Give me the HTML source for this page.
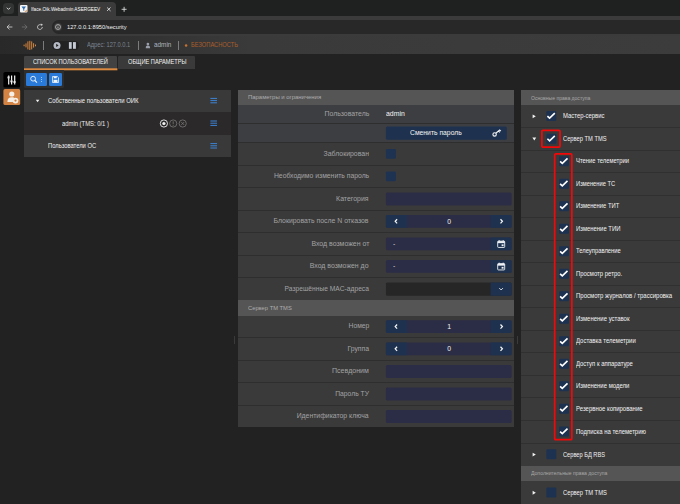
<!DOCTYPE html>
<html lang="ru"><head><meta charset="utf-8"><title>Iface.Oik.Webadmin ASERGEEV</title>
<style>
*{box-sizing:border-box;margin:0;padding:0}
html,body{width:680px;height:504px;overflow:hidden;background:#222222;font-family:"Liberation Sans",sans-serif;color:#e8e8e8}
.abs{position:absolute}
#root{position:relative;width:680px;height:504px;overflow:hidden;background:#222222}
.t{position:absolute;white-space:nowrap;line-height:1}
</style></head><body><div id="root">

<!-- browser chrome -->
<div class="abs" style="left:0px;top:0px;width:680px;height:16px;background:#1f2120"></div>
<div class="abs" style="left:3px;top:3px;width:11px;height:11px;background:#333535;border-radius:3.5px"></div>
<svg class="abs" style="left:6px;top:6px" width="6" height="6"><g transform="translate(0 0.8)"><path d="M0.8 0.9 L2.5 2.6 L4.2 0.9" fill="none" stroke="#e4e4e4" stroke-width="0.9"/></g></svg>
<div class="abs" style="left:18px;top:2px;width:98px;height:15px;background:#3b3b3b;border-radius:4px 4px 0 0"></div>
<svg class="abs" style="left:20px;top:5px" width="9" height="9"><g transform="translate(0 0) scale(0.5 0.5)"><rect width="15" height="15" rx="2" fill="#f4f6f8"/><path d="M3 3 H12 L8.5 8 V12 L6.5 11 V8 Z" fill="#2f6fb3"/><path d="M9 13.5 L13.5 9 V13.5 Z" fill="#e08a3c"/></g></svg>
<div class="t" style="left:30.6px;top:5.85px;font-size:6.2px;color:#ffffff;transform:scaleX(0.761);transform-origin:0 50%">Iface.Oik.Webadmin ASERGEEV</div>
<svg class="abs" style="left:106px;top:6px" width="7" height="7"><g transform="translate(0.5 0.9)"><path d="M0.6 0.6 L4 4 M4 0.6 L0.6 4" stroke="#e8e8e8" stroke-width="0.85"/></g></svg>
<svg class="abs" style="left:121px;top:6px" width="8" height="8"><g transform="translate(0.2 0.4)"><path d="M2.9 0.4 V5.4 M0.4 2.9 H5.4" stroke="#e0e0e0" stroke-width="0.85"/></g></svg>
<div class="abs" style="left:0px;top:16px;width:680px;height:20px;background:#3b3b3b;border-radius:3px 0 0 0"></div>
<div class="abs" style="left:51.5px;top:20.4px;width:640px;height:13.2px;background:#282828;border-radius:6.6px"></div>
<svg class="abs" style="left:6px;top:23px" width="8" height="9"><g transform="translate(0.3 0.8)"><path d="M3.3 0.7 L0.8 3.2 L3.3 5.7 M0.8 3.2 H6.1" fill="none" stroke="#d0d0d0" stroke-width="0.85"/></g></svg>
<svg class="abs" style="left:21px;top:23px" width="8" height="9"><g transform="translate(0.3 0.8)"><path d="M3.3 0.7 L5.8 3.2 L3.3 5.7 M5.8 3.2 H0.5" fill="none" stroke="#707070" stroke-width="0.85"/></g></svg>
<svg class="abs" style="left:36px;top:23px" width="9" height="9"><g transform="translate(0.6 0.6)"><path d="M5.7 3.4 A2.4 2.4 0 1 1 4.7 1.5" fill="none" stroke="#d0d0d0" stroke-width="0.85"/><path d="M3.9 0.2 L6.1 0.5 L5.3 2.6 Z" fill="#d0d0d0"/></g></svg>
<div class="abs" style="left:53.8px;top:22.8px;width:8.4px;height:8.4px;background:#3e3e3e;border-radius:50%"></div>
<svg class="abs" style="left:55px;top:24px" width="7" height="7"><g transform="translate(0 0)"><circle cx="3" cy="3" r="2.5" fill="none" stroke="#e4e4e4" stroke-width="0.6"/><path d="M3 2.7 V4.4" stroke="#e4e4e4" stroke-width="0.65"/><circle cx="3" cy="1.8" r="0.4" fill="#e4e4e4"/></g></svg>
<div class="t" style="left:67.2px;top:23.86px;font-size:6px;color:#f0f0f0;transform:scaleX(0.954);transform-origin:0 50%">127.0.0.1:8950/security</div>
<!-- app header -->
<div class="abs" style="left:0px;top:36px;width:680px;height:17.8px;background:linear-gradient(to right,#292929 0,#303030 110px,#3a3a3a 250px,#3c3c3c 100%)"></div>
<svg class="abs" style="left:23px;top:40px" width="15" height="12"><g transform="translate(0.4 0.6)"><g stroke="#d9873f" stroke-width="1" stroke-linecap="round"><path d="M0.7 4.4 V5.2"/><path d="M2.6 3.2 V6.4"/><path d="M4.5 1.2 V8.4"/><path d="M6.4 0.6 V9"/><path d="M8.3 1.2 V8.4"/><path d="M10.2 3.0 V6.6"/><path d="M12.1 4.3 V5.3"/></g></g></svg>
<div class="abs" style="left:43px;top:41px;width:1px;height:9px;background:#7c7c7c"></div>
<div class="abs" style="left:51.5px;top:40.8px;width:27.3px;height:9.2px;background:#222222;border-radius:4.6px"></div>
<svg class="abs" style="left:53px;top:41px" width="9" height="10"><g transform="translate(0.3 0.7)"><circle cx="3.7" cy="3.7" r="3.5" fill="#b4b9c4"/><path d="M2.9 2.1 L5.3 3.7 L2.9 5.3 Z" fill="#222"/></g></svg>
<svg class="abs" style="left:68px;top:42px" width="5" height="8"><g transform="translate(0.9 0.1)"><rect width="2.8" height="6.7" fill="#c5cad4"/></g></svg>
<svg class="abs" style="left:73px;top:42px" width="4" height="8"><g transform="translate(0 0.1)"><rect width="2.9" height="6.7" fill="#c5cad4"/></g></svg>
<div class="t" style="left:86.7px;top:41.81px;font-size:6.65px;color:#7c8492;transform:scaleX(0.858);transform-origin:0 50%">Адрес: 127.0.0.1</div>
<div class="abs" style="left:138px;top:41px;width:1px;height:9px;background:#7c7c7c"></div>
<svg class="abs" style="left:145px;top:42px" width="7" height="8"><g transform="translate(0.5 0.6)"><circle cx="2.4" cy="1.5" r="1.35" fill="#9aa0ab"/><path d="M0.2 5.6 C0.2 3.5 1 2.9 2.4 2.9 C3.8 2.9 4.6 3.5 4.6 5.6 Z" fill="#9aa0ab"/></g></svg>
<div class="t" style="left:153.6px;top:41.81px;font-size:6.65px;color:#aeb3bd;transform:scaleX(0.961);transform-origin:0 50%">admin</div>
<div class="abs" style="left:178px;top:41px;width:1px;height:9px;background:#7c7c7c"></div>
<svg class="abs" style="left:184px;top:44px" width="5" height="4"><g transform="translate(0.8 0.3)"><circle cx="1.3" cy="1.3" r="1.25" fill="#c9722e"/></g></svg>
<div class="t" style="left:191px;top:41.99px;font-size:6.5px;color:#ab5f2b;transform:scaleX(0.880);transform-origin:0 50%">БЕЗОПАСНОСТЬ</div>
<!-- page tabs -->
<div class="abs" style="left:24px;top:55.8px;width:93.4px;height:14px;background:#424242;border-radius:1px 1px 0 0"></div>
<svg class="abs" style="left:24px;top:68px" width="95" height="4"><g transform="translate(0 0.3)"><rect width="93.4" height="2" fill="#dd8a40"/></g></svg>
<div class="t" style="left:33.2px;top:59.14px;font-size:6.6px;color:#f2f2f2;transform:scaleX(0.861);transform-origin:0 50%">СПИСОК ПОЛЬЗОВАТЕЛЕЙ</div>
<div class="abs" style="left:118.2px;top:55.8px;width:76.8px;height:12.8px;background:#3a3a3a;border-radius:1px 1px 0 0"></div>
<div class="t" style="left:127.6px;top:59.14px;font-size:6.6px;color:#f2f2f2;transform:scaleX(0.858);transform-origin:0 50%">ОБЩИЕ ПАРАМЕТРЫ</div>
<!-- sidebar -->
<svg class="abs" style="left:3px;top:71px" width="19" height="18"><g transform="translate(0.4 0.9)"><rect width="16.7" height="15.7" fill="#000000" rx="1.6"/></g></svg>
<svg class="abs" style="left:7px;top:75px" width="11" height="11"><g transform="translate(0 0.4)"><g stroke="#f4f4f4" stroke-width="1.2"><path d="M1.7 0 V9.2"/><path d="M4.6 0 V9.2"/><path d="M7.7 0 V9.2"/></g><g fill="#000" stroke="#f4f4f4" stroke-width="0.6"><rect x="0.8" y="1.4" width="1.8" height="1.3"/><rect x="3.7" y="5.3" width="1.8" height="1.3"/><rect x="6.8" y="6" width="1.8" height="1.3"/></g></g></svg>
<svg class="abs" style="left:3px;top:89px" width="19" height="18"><g transform="translate(0.4 0.1)"><rect width="16.8" height="16" fill="#d38343" rx="1.6"/></g></svg>
<svg class="abs" style="left:6px;top:91px" width="14" height="14"><g transform="translate(0.6 0.2)"><circle cx="5.2" cy="2.8" r="2.6" fill="#f6efe8"/><path d="M0.8 10.8 C0.8 7.4 2.4 6 5.2 6 C6.4 6 7 6.2 7.6 6.6 L6.2 10.8 Z" fill="#f6efe8"/><circle cx="8.9" cy="9.4" r="2.9" fill="#f6efe8"/><circle cx="8.9" cy="9.4" r="1.15" fill="#d38343"/></g></svg>
<!-- list toolbar -->
<div class="abs" style="left:24px;top:70.2px;width:39.6px;height:17.6px;background:#2e2e2e;border-radius:0 0 1.5px 1.5px"></div>
<div class="abs" style="left:25.8px;top:72.8px;width:21px;height:13.2px;background:#2a7ad9;border-radius:1.2px"></div>
<svg class="abs" style="left:30px;top:75px" width="9" height="9"><g transform="translate(0 0.6)"><circle cx="3.1" cy="3.1" r="2.4" fill="none" stroke="#eef4fb" stroke-width="0.9"/><path d="M4.9 4.9 L7 7" stroke="#eef4fb" stroke-width="1.1"/></g></svg>
<div class="abs" style="left:41px;top:77px;width:0.9px;height:0.9px;background:#9cc4ee"></div>
<div class="abs" style="left:41px;top:79px;width:0.9px;height:0.9px;background:#9cc4ee"></div>
<div class="abs" style="left:41px;top:81px;width:0.9px;height:0.9px;background:#9cc4ee"></div>
<div class="abs" style="left:48.8px;top:72.8px;width:13.3px;height:13.2px;background:#2a7ad9;border-radius:1.2px"></div>
<svg class="abs" style="left:52px;top:76px" width="8" height="8"><g transform="translate(0 0)"><path d="M0.5 0.5 H5.3 L6.5 1.7 V6.5 H0.5 Z" fill="none" stroke="#eef4fb" stroke-width="0.8"/><rect x="1.7" y="0.6" width="3" height="1.7" fill="#eef4fb"/><rect x="1.5" y="3.8" width="4" height="2.6" fill="#eef4fb"/></g></svg>
<!-- users tree -->
<div class="abs" style="left:23.6px;top:89.8px;width:207.2px;height:22.2px;background:#393939"></div>
<div class="abs" style="left:23.6px;top:112px;width:207.2px;height:23px;background:#2b2929"></div>
<div class="abs" style="left:23.6px;top:135px;width:207.2px;height:21.8px;background:#393939"></div>
<svg class="abs" style="left:35px;top:99px" width="6" height="5"><g transform="translate(0.8 0.7)"><path d="M0 0 H3.6 L1.8 2.6 Z" fill="#f0f0f0"/></g></svg>
<div class="t" style="left:47.8px;top:97.81px;font-size:6.65px;color:#efefef;transform:scaleX(0.895);transform-origin:0 50%">Собственные пользователи ОИК</div>
<div class="t" style="left:61.7px;top:120.51px;font-size:6.65px;color:#efefef;transform:scaleX(0.883);transform-origin:0 50%">admin (TMS: 0/1 )</div>
<div class="t" style="left:47.8px;top:143.11px;font-size:6.65px;color:#efefef;transform:scaleX(0.873);transform-origin:0 50%">Пользователи ОС</div>
<svg class="abs" style="left:210px;top:97px" width="9" height="8"><g transform="translate(0.4 0.6)"><path d="M0 0.8 H6.6 M0 3 H6.6 M0 5.2 H6.6" stroke="#3d83d6" stroke-width="1"/></g></svg>
<svg class="abs" style="left:210px;top:120px" width="9" height="8"><g transform="translate(0.4 0.2)"><path d="M0 0.8 H6.6 M0 3 H6.6 M0 5.2 H6.6" stroke="#3d83d6" stroke-width="1"/></g></svg>
<svg class="abs" style="left:210px;top:142px" width="9" height="8"><g transform="translate(0.4 0.8)"><path d="M0 0.8 H6.6 M0 3 H6.6 M0 5.2 H6.6" stroke="#3d83d6" stroke-width="1"/></g></svg>
<svg class="abs" style="left:159px;top:119px" width="30" height="10"><g transform="translate(0.6 0.3)"><circle cx="4.3" cy="4.2" r="3.6" fill="none" stroke="#f2f2f2" stroke-width="0.9"/><circle cx="4.3" cy="4.2" r="1.6" fill="#f2f2f2"/><circle cx="13.6" cy="4.2" r="3.6" fill="none" stroke="#858282" stroke-width="0.7"/><path d="M13.6 2 V4.9 M13.6 5.7 V6.5" stroke="#858282" stroke-width="0.7"/><circle cx="23.1" cy="4.2" r="3.6" fill="none" stroke="#858282" stroke-width="0.7"/><path d="M21.7 2.8 L24.5 5.6 M24.5 2.8 L21.7 5.6" stroke="#858282" stroke-width="0.7"/></g></svg>
<div class="abs" style="left:233.6px;top:336px;width:0.8px;height:8px;background:#3a3a3a"></div>
<div class="abs" style="left:516.6px;top:336px;width:0.8px;height:8px;background:#3a3a3a"></div>
<!-- parameters panel -->
<div class="abs" style="left:237.7px;top:90.2px;width:276px;height:337.3px;background:#3a3a3b"></div>
<div class="abs" style="left:237.7px;top:105px;width:276px;height:37.5px;background:#3d3e42"></div>
<div class="abs" style="left:237.7px;top:90.2px;width:276px;height:14.8px;background:#555555"></div>
<div class="t" style="left:247.7px;top:95.42px;font-size:5.7px;color:#adadad;transform:scaleX(1.044);transform-origin:0 50%">Параметры и ограничения</div>
<div class="abs" style="left:237.7px;top:300px;width:276px;height:15.5px;background:#555555"></div>
<div class="t" style="left:247.7px;top:305.57px;font-size:5.7px;color:#adadad;transform:scaleX(1.016);transform-origin:0 50%">Сервер ТМ TMS</div>
<div class="t" style="left:319.68px;top:110.05px;font-size:7.6px;color:#a3a3a3;transform:scaleX(0.908);transform-origin:100% 50%">Пользователь</div>
<div class="t" style="left:385.9px;top:110.05px;font-size:7.6px;color:#f4f4f4;transform:scaleX(0.906);transform-origin:0 50%">admin</div>
<div class="abs" style="left:237.7px;top:122.8px;width:276px;height:1px;background:#2e2e2f"></div>
<svg class="abs" style="left:385px;top:126px" width="123" height="15"><g transform="translate(0.9 0.5)"><rect width="120.9" height="13.2" fill="#1e324f" rx="1.5"/></g></svg>
<div class="t" style="left:409.7px;top:129px;font-size:7.6px;color:#f4f4f4;transform:scaleX(0.894);transform-origin:0 50%">Сменить пароль</div>
<svg class="abs" style="left:492px;top:129px" width="11" height="9"><g transform="translate(0.2 0)"><circle cx="2.4" cy="5.4" r="1.7" fill="none" stroke="#f4f4f4" stroke-width="1.1"/><path d="M3.6 4.2 L7.8 0.8 M6.4 2 L7.6 3.4 M7.6 1 L8.6 2.2" stroke="#f4f4f4" stroke-width="1.1" fill="none"/></g></svg>
<div class="abs" style="left:237.7px;top:142px;width:276px;height:1px;background:#2e2e2f"></div>
<div class="t" style="left:319.02px;top:149.65px;font-size:7.6px;color:#a3a3a3;transform:scaleX(0.908);transform-origin:100% 50%">Заблокирован</div>
<svg class="abs" style="left:385px;top:149px" width="12" height="11"><g transform="translate(0.9 0)"><rect width="10" height="9.7" fill="#1e3351" rx="1.2"/></g></svg>
<div class="abs" style="left:237.7px;top:164.5px;width:276px;height:1px;background:#2e2e2f"></div>
<div class="t" style="left:262.74px;top:172.15px;font-size:7.6px;color:#a3a3a3;transform:scaleX(0.897);transform-origin:100% 50%">Необходимо изменить пароль</div>
<svg class="abs" style="left:385px;top:171px" width="12" height="12"><g transform="translate(0.9 0.5)"><rect width="10" height="9.7" fill="#1e3351" rx="1.2"/></g></svg>
<div class="abs" style="left:237.7px;top:187px;width:276px;height:1px;background:#2e2e2f"></div>
<div class="t" style="left:333.47px;top:194.65px;font-size:7.6px;color:#a3a3a3;transform:scaleX(0.912);transform-origin:100% 50%">Категория</div>
<svg class="abs" style="left:385px;top:192px" width="128" height="15"><g transform="translate(0.9 0.45)"><rect width="125.7" height="13" fill="#2b2c45" rx="1.5"/></g></svg>
<div class="abs" style="left:237.7px;top:209.5px;width:276px;height:1px;background:#2e2e2f"></div>
<div class="t" style="left:264.41px;top:217.15px;font-size:7.6px;color:#a3a3a3;transform:scaleX(0.909);transform-origin:100% 50%">Блокировать после N отказов</div>
<svg class="abs" style="left:385px;top:214px" width="128" height="15"><g transform="translate(0.9 0.95)"><rect width="125.7" height="12.8" fill="#2b2c45" rx="1.5"/></g></svg>
<svg class="abs" style="left:385px;top:214px" width="23" height="15"><g transform="translate(0.9 0.95)"><path d="M1.5 0 H21 V12.8 H1.5 A1.5 1.5 0 0 1 0 11.3 V1.5 A1.5 1.5 0 0 1 1.5 0 Z" fill="#1e324f"/></g></svg>
<svg class="abs" style="left:490px;top:214px" width="23" height="15"><g transform="translate(0.6 0.95)"><path d="M0 0 H19.5 A1.5 1.5 0 0 1 21 1.5 V11.3 A1.5 1.5 0 0 1 19.5 12.8 H0 Z" fill="#1e324f"/></g></svg>
<svg class="abs" style="left:394px;top:218px" width="6" height="8"><g transform="translate(0.3 0.45)"><path d="M2.8 0.8 L0.9 2.9 L2.8 5" fill="none" stroke="#f6f6f6" stroke-width="1.25"/></g></svg>
<svg class="abs" style="left:499px;top:218px" width="6" height="8"><g transform="translate(0.6 0.45)"><path d="M0.9 0.8 L2.8 2.9 L0.9 5" fill="none" stroke="#f6f6f6" stroke-width="1.25"/></g></svg>
<div class="t" style="left:446.69px;top:217.75px;font-size:7.6px;color:#f4f4f4;transform:scaleX(0.906);transform-origin:50% 50%">0</div>
<div class="abs" style="left:237.7px;top:232px;width:276px;height:1px;background:#2e2e2f"></div>
<div class="t" style="left:305.59px;top:239.65px;font-size:7.6px;color:#a3a3a3;transform:scaleX(0.915);transform-origin:100% 50%">Вход возможен от</div>
<svg class="abs" style="left:385px;top:237px" width="128" height="15"><g transform="translate(0.9 0.45)"><rect width="125.7" height="12.8" fill="#2b2c45" rx="1.5"/></g></svg>
<svg class="abs" style="left:490px;top:237px" width="23" height="15"><g transform="translate(0.6 0.45)"><path d="M0 0 H19.5 A1.5 1.5 0 0 1 21 1.5 V11.3 A1.5 1.5 0 0 1 19.5 12.8 H0 Z" fill="#1e324f"/></g></svg>
<svg class="abs" style="left:497px;top:239px" width="10" height="10"><g transform="translate(0.2 0.95)"><rect x="0.5" y="1.2" width="7" height="6.3" rx="0.7" fill="none" stroke="#eef2f6" stroke-width="0.9"/><rect x="0.5" y="1.2" width="7" height="2" fill="#eef2f6"/><path d="M2 0.2 V1.6 M6 0.2 V1.6" stroke="#eef2f6" stroke-width="0.9"/><rect x="4.4" y="4.4" width="2" height="1.8" fill="#eef2f6"/></g></svg>
<div class="t" style="left:393.4px;top:239.95px;font-size:7.6px;color:#d0d0d8;transform:scaleX(0.906);transform-origin:0 50%">-</div>
<div class="abs" style="left:237.7px;top:254.5px;width:276px;height:1px;background:#2e2e2f"></div>
<div class="t" style="left:304.47px;top:262.15px;font-size:7.6px;color:#a3a3a3;transform:scaleX(0.911);transform-origin:100% 50%">Вход возможен до</div>
<svg class="abs" style="left:385px;top:259px" width="128" height="15"><g transform="translate(0.9 0.95)"><rect width="125.7" height="12.8" fill="#2b2c45" rx="1.5"/></g></svg>
<svg class="abs" style="left:490px;top:259px" width="23" height="15"><g transform="translate(0.6 0.95)"><path d="M0 0 H19.5 A1.5 1.5 0 0 1 21 1.5 V11.3 A1.5 1.5 0 0 1 19.5 12.8 H0 Z" fill="#1e324f"/></g></svg>
<svg class="abs" style="left:497px;top:262px" width="10" height="10"><g transform="translate(0.2 0.45)"><rect x="0.5" y="1.2" width="7" height="6.3" rx="0.7" fill="none" stroke="#eef2f6" stroke-width="0.9"/><rect x="0.5" y="1.2" width="7" height="2" fill="#eef2f6"/><path d="M2 0.2 V1.6 M6 0.2 V1.6" stroke="#eef2f6" stroke-width="0.9"/><rect x="4.4" y="4.4" width="2" height="1.8" fill="#eef2f6"/></g></svg>
<div class="t" style="left:393.4px;top:262.45px;font-size:7.6px;color:#d0d0d8;transform:scaleX(0.906);transform-origin:0 50%">-</div>
<div class="abs" style="left:237.7px;top:277px;width:276px;height:1px;background:#2e2e2f"></div>
<div class="t" style="left:273.02px;top:284.65px;font-size:7.6px;color:#a3a3a3;transform:scaleX(0.879);transform-origin:100% 50%">Разрешённые MAC-адреса</div>
<svg class="abs" style="left:385px;top:282px" width="128" height="15"><g transform="translate(0.9 0.45)"><rect width="125.7" height="13.2" fill="#262626" rx="1.5"/></g></svg>
<svg class="abs" style="left:490px;top:282px" width="23" height="15"><g transform="translate(0.6 0.45)"><path d="M0 0 H19.5 A1.5 1.5 0 0 1 21 1.5 V11.7 A1.5 1.5 0 0 1 19.5 13.2 H0 Z" fill="#1e324f"/></g></svg>
<svg class="abs" style="left:498px;top:287px" width="7" height="6"><g transform="translate(0.6 0.25)"><path d="M0.7 0.9 L2.5 2.7 L4.3 0.9" fill="none" stroke="#f2f2f2" stroke-width="0.9"/></g></svg>
<div class="t" style="left:345.61px;top:322.4px;font-size:7.6px;color:#a3a3a3;transform:scaleX(0.893);transform-origin:100% 50%">Номер</div>
<svg class="abs" style="left:385px;top:320px" width="128" height="14"><g transform="translate(0.9 0.2)"><rect width="125.7" height="12.8" fill="#2b2c45" rx="1.5"/></g></svg>
<svg class="abs" style="left:385px;top:320px" width="23" height="14"><g transform="translate(0.9 0.2)"><path d="M1.5 0 H21 V12.8 H1.5 A1.5 1.5 0 0 1 0 11.3 V1.5 A1.5 1.5 0 0 1 1.5 0 Z" fill="#1e324f"/></g></svg>
<svg class="abs" style="left:490px;top:320px" width="23" height="14"><g transform="translate(0.6 0.2)"><path d="M0 0 H19.5 A1.5 1.5 0 0 1 21 1.5 V11.3 A1.5 1.5 0 0 1 19.5 12.8 H0 Z" fill="#1e324f"/></g></svg>
<svg class="abs" style="left:394px;top:323px" width="6" height="8"><g transform="translate(0.3 0.7)"><path d="M2.8 0.8 L0.9 2.9 L2.8 5" fill="none" stroke="#f6f6f6" stroke-width="1.25"/></g></svg>
<svg class="abs" style="left:499px;top:323px" width="6" height="8"><g transform="translate(0.6 0.7)"><path d="M0.9 0.8 L2.8 2.9 L0.9 5" fill="none" stroke="#f6f6f6" stroke-width="1.25"/></g></svg>
<div class="t" style="left:446.69px;top:323px;font-size:7.6px;color:#f4f4f4;transform:scaleX(0.906);transform-origin:50% 50%">1</div>
<div class="abs" style="left:237.7px;top:337px;width:276px;height:1px;background:#2e2e2f"></div>
<div class="t" style="left:344.91px;top:344.65px;font-size:7.6px;color:#a3a3a3;transform:scaleX(0.901);transform-origin:100% 50%">Группа</div>
<svg class="abs" style="left:385px;top:342px" width="128" height="15"><g transform="translate(0.9 0.45)"><rect width="125.7" height="12.8" fill="#2b2c45" rx="1.5"/></g></svg>
<svg class="abs" style="left:385px;top:342px" width="23" height="15"><g transform="translate(0.9 0.45)"><path d="M1.5 0 H21 V12.8 H1.5 A1.5 1.5 0 0 1 0 11.3 V1.5 A1.5 1.5 0 0 1 1.5 0 Z" fill="#1e324f"/></g></svg>
<svg class="abs" style="left:490px;top:342px" width="23" height="15"><g transform="translate(0.6 0.45)"><path d="M0 0 H19.5 A1.5 1.5 0 0 1 21 1.5 V11.3 A1.5 1.5 0 0 1 19.5 12.8 H0 Z" fill="#1e324f"/></g></svg>
<svg class="abs" style="left:394px;top:345px" width="6" height="8"><g transform="translate(0.3 0.95)"><path d="M2.8 0.8 L0.9 2.9 L2.8 5" fill="none" stroke="#f6f6f6" stroke-width="1.25"/></g></svg>
<svg class="abs" style="left:499px;top:345px" width="6" height="8"><g transform="translate(0.6 0.95)"><path d="M0.9 0.8 L2.8 2.9 L0.9 5" fill="none" stroke="#f6f6f6" stroke-width="1.25"/></g></svg>
<div class="t" style="left:446.69px;top:345.25px;font-size:7.6px;color:#f4f4f4;transform:scaleX(0.906);transform-origin:50% 50%">0</div>
<div class="abs" style="left:237.7px;top:359.5px;width:276px;height:1px;background:#2e2e2f"></div>
<div class="t" style="left:329.23px;top:367.15px;font-size:7.6px;color:#a3a3a3;transform:scaleX(0.923);transform-origin:100% 50%">Псевдоним</div>
<svg class="abs" style="left:385px;top:364px" width="128" height="15"><g transform="translate(0.9 0.95)"><rect width="125.7" height="13" fill="#2b2c45" rx="1.5"/></g></svg>
<div class="abs" style="left:237.7px;top:382px;width:276px;height:1px;background:#2e2e2f"></div>
<div class="t" style="left:331.05px;top:389.65px;font-size:7.6px;color:#a3a3a3;transform:scaleX(0.888);transform-origin:100% 50%">Пароль ТУ</div>
<svg class="abs" style="left:385px;top:387px" width="128" height="15"><g transform="translate(0.9 0.45)"><rect width="125.7" height="13" fill="#2b2c45" rx="1.5"/></g></svg>
<div class="abs" style="left:237.7px;top:404.5px;width:276px;height:1px;background:#2e2e2f"></div>
<div class="t" style="left:289.38px;top:412.15px;font-size:7.6px;color:#a3a3a3;transform:scaleX(0.904);transform-origin:100% 50%">Идентификатор ключа</div>
<svg class="abs" style="left:385px;top:409px" width="128" height="15"><g transform="translate(0.9 0.95)"><rect width="125.7" height="13" fill="#2b2c45" rx="1.5"/></g></svg>
<!-- rights panel -->
<div class="abs" style="left:521.2px;top:90.4px;width:158.8px;height:414px;background:#3a3a3b"></div>
<div class="abs" style="left:521.2px;top:90.4px;width:158.8px;height:14.3px;background:#555555"></div>
<div class="t" style="left:530.6px;top:95.97px;font-size:5.7px;color:#a8a8a8;transform:scaleX(0.889);transform-origin:0 50%">Основные права доступа</div>
<div class="abs" style="left:521.2px;top:465.5px;width:158.8px;height:15.4px;background:#555555"></div>
<div class="t" style="left:530.6px;top:471.02px;font-size:5.7px;color:#a8a8a8;transform:scaleX(0.900);transform-origin:0 50%">Дополнительные права доступа</div>
<svg class="abs" style="left:546px;top:111px" width="12" height="12"><g transform="translate(0.3 0)"><rect width="10" height="10" fill="#1d3251" rx="1.2"/></g></svg>
<svg class="abs" style="left:546px;top:111px" width="12" height="12"><g transform="translate(0.3 0)"><path d="M1.1 5.1 L3.3 7.2 L8.5 2.2" fill="none" stroke="#ffffff" stroke-width="1.6"/></g></svg>
<div class="t" style="left:563.2px;top:113.26px;font-size:6.65px;color:#f2f2f2;transform:scaleX(0.892);transform-origin:0 50%">Мастер-сервис</div>
<svg class="abs" style="left:532px;top:114px" width="5" height="6"><g transform="translate(0.6 0.45)"><path d="M0 0 L3.2 1.9 L0 3.8 Z" fill="#f2f2f2"/></g></svg>
<div class="abs" style="left:521.2px;top:126.9px;width:158.8px;height:1px;background:#303030"></div>
<svg class="abs" style="left:546px;top:133px" width="12" height="12"><g transform="translate(0.3 0.65)"><rect width="10" height="10" fill="#1d3251" rx="1.2"/></g></svg>
<svg class="abs" style="left:546px;top:133px" width="12" height="12"><g transform="translate(0.3 0.65)"><path d="M1.1 5.1 L3.3 7.2 L8.5 2.2" fill="none" stroke="#ffffff" stroke-width="1.6"/></g></svg>
<div class="t" style="left:563.2px;top:135.91px;font-size:6.65px;color:#f2f2f2;transform:scaleX(0.867);transform-origin:0 50%">Сервер ТМ TMS</div>
<svg class="abs" style="left:532px;top:137px" width="6" height="5"><g transform="translate(0.4 0.5)"><path d="M0 0 H3.8 L1.9 3 Z" fill="#f2f2f2"/></g></svg>
<div class="abs" style="left:521.2px;top:149.5px;width:158.8px;height:1px;background:#303030"></div>
<svg class="abs" style="left:559px;top:156px" width="11" height="12"><g transform="translate(0 0.2)"><rect width="10" height="10" fill="#1d3251" rx="1.2"/></g></svg>
<svg class="abs" style="left:559px;top:156px" width="11" height="12"><g transform="translate(0 0.2)"><path d="M1.1 5.1 L3.3 7.2 L8.5 2.2" fill="none" stroke="#ffffff" stroke-width="1.6"/></g></svg>
<div class="t" style="left:575.7px;top:158.46px;font-size:6.65px;color:#f2f2f2;transform:scaleX(0.881);transform-origin:0 50%">Чтение телеметрии</div>
<div class="abs" style="left:521.2px;top:172px;width:158.8px;height:1px;background:#303030"></div>
<svg class="abs" style="left:559px;top:178px" width="11" height="12"><g transform="translate(0 0.7)"><rect width="10" height="10" fill="#1d3251" rx="1.2"/></g></svg>
<svg class="abs" style="left:559px;top:178px" width="11" height="12"><g transform="translate(0 0.7)"><path d="M1.1 5.1 L3.3 7.2 L8.5 2.2" fill="none" stroke="#ffffff" stroke-width="1.6"/></g></svg>
<div class="t" style="left:575.7px;top:180.96px;font-size:6.65px;color:#f2f2f2;transform:scaleX(0.866);transform-origin:0 50%">Изменение ТС</div>
<div class="abs" style="left:521.2px;top:194.5px;width:158.8px;height:1px;background:#303030"></div>
<svg class="abs" style="left:559px;top:201px" width="11" height="12"><g transform="translate(0 0.2)"><rect width="10" height="10" fill="#1d3251" rx="1.2"/></g></svg>
<svg class="abs" style="left:559px;top:201px" width="11" height="12"><g transform="translate(0 0.2)"><path d="M1.1 5.1 L3.3 7.2 L8.5 2.2" fill="none" stroke="#ffffff" stroke-width="1.6"/></g></svg>
<div class="t" style="left:575.7px;top:203.46px;font-size:6.65px;color:#f2f2f2;transform:scaleX(0.880);transform-origin:0 50%">Изменение ТИТ</div>
<div class="abs" style="left:521.2px;top:217px;width:158.8px;height:1px;background:#303030"></div>
<svg class="abs" style="left:559px;top:223px" width="11" height="12"><g transform="translate(0 0.7)"><rect width="10" height="10" fill="#1d3251" rx="1.2"/></g></svg>
<svg class="abs" style="left:559px;top:223px" width="11" height="12"><g transform="translate(0 0.7)"><path d="M1.1 5.1 L3.3 7.2 L8.5 2.2" fill="none" stroke="#ffffff" stroke-width="1.6"/></g></svg>
<div class="t" style="left:575.7px;top:225.96px;font-size:6.65px;color:#f2f2f2;transform:scaleX(0.890);transform-origin:0 50%">Изменение ТИИ</div>
<div class="abs" style="left:521.2px;top:239.5px;width:158.8px;height:1px;background:#303030"></div>
<svg class="abs" style="left:559px;top:246px" width="11" height="12"><g transform="translate(0 0.2)"><rect width="10" height="10" fill="#1d3251" rx="1.2"/></g></svg>
<svg class="abs" style="left:559px;top:246px" width="11" height="12"><g transform="translate(0 0.2)"><path d="M1.1 5.1 L3.3 7.2 L8.5 2.2" fill="none" stroke="#ffffff" stroke-width="1.6"/></g></svg>
<div class="t" style="left:575.7px;top:248.46px;font-size:6.65px;color:#f2f2f2;transform:scaleX(0.878);transform-origin:0 50%">Телеуправление</div>
<div class="abs" style="left:521.2px;top:262px;width:158.8px;height:1px;background:#303030"></div>
<svg class="abs" style="left:559px;top:268px" width="11" height="12"><g transform="translate(0 0.7)"><rect width="10" height="10" fill="#1d3251" rx="1.2"/></g></svg>
<svg class="abs" style="left:559px;top:268px" width="11" height="12"><g transform="translate(0 0.7)"><path d="M1.1 5.1 L3.3 7.2 L8.5 2.2" fill="none" stroke="#ffffff" stroke-width="1.6"/></g></svg>
<div class="t" style="left:575.7px;top:270.96px;font-size:6.65px;color:#f2f2f2;transform:scaleX(0.894);transform-origin:0 50%">Просмотр ретро.</div>
<div class="abs" style="left:521.2px;top:284.5px;width:158.8px;height:1px;background:#303030"></div>
<svg class="abs" style="left:559px;top:291px" width="11" height="12"><g transform="translate(0 0.2)"><rect width="10" height="10" fill="#1d3251" rx="1.2"/></g></svg>
<svg class="abs" style="left:559px;top:291px" width="11" height="12"><g transform="translate(0 0.2)"><path d="M1.1 5.1 L3.3 7.2 L8.5 2.2" fill="none" stroke="#ffffff" stroke-width="1.6"/></g></svg>
<div class="t" style="left:575.7px;top:293.46px;font-size:6.65px;color:#f2f2f2;transform:scaleX(0.905);transform-origin:0 50%">Просмотр журналов / трассировка</div>
<div class="abs" style="left:521.2px;top:307px;width:158.8px;height:1px;background:#303030"></div>
<svg class="abs" style="left:559px;top:313px" width="11" height="12"><g transform="translate(0 0.7)"><rect width="10" height="10" fill="#1d3251" rx="1.2"/></g></svg>
<svg class="abs" style="left:559px;top:313px" width="11" height="12"><g transform="translate(0 0.7)"><path d="M1.1 5.1 L3.3 7.2 L8.5 2.2" fill="none" stroke="#ffffff" stroke-width="1.6"/></g></svg>
<div class="t" style="left:575.7px;top:315.96px;font-size:6.65px;color:#f2f2f2;transform:scaleX(0.898);transform-origin:0 50%">Изменение уставок</div>
<div class="abs" style="left:521.2px;top:329.5px;width:158.8px;height:1px;background:#303030"></div>
<svg class="abs" style="left:559px;top:336px" width="11" height="12"><g transform="translate(0 0.2)"><rect width="10" height="10" fill="#1d3251" rx="1.2"/></g></svg>
<svg class="abs" style="left:559px;top:336px" width="11" height="12"><g transform="translate(0 0.2)"><path d="M1.1 5.1 L3.3 7.2 L8.5 2.2" fill="none" stroke="#ffffff" stroke-width="1.6"/></g></svg>
<div class="t" style="left:575.7px;top:338.46px;font-size:6.65px;color:#f2f2f2;transform:scaleX(0.897);transform-origin:0 50%">Доставка телеметрии</div>
<div class="abs" style="left:521.2px;top:352px;width:158.8px;height:1px;background:#303030"></div>
<svg class="abs" style="left:559px;top:358px" width="11" height="12"><g transform="translate(0 0.7)"><rect width="10" height="10" fill="#1d3251" rx="1.2"/></g></svg>
<svg class="abs" style="left:559px;top:358px" width="11" height="12"><g transform="translate(0 0.7)"><path d="M1.1 5.1 L3.3 7.2 L8.5 2.2" fill="none" stroke="#ffffff" stroke-width="1.6"/></g></svg>
<div class="t" style="left:575.7px;top:360.96px;font-size:6.65px;color:#f2f2f2;transform:scaleX(0.892);transform-origin:0 50%">Доступ к аппаратуре</div>
<div class="abs" style="left:521.2px;top:374.5px;width:158.8px;height:1px;background:#303030"></div>
<svg class="abs" style="left:559px;top:381px" width="11" height="12"><g transform="translate(0 0.2)"><rect width="10" height="10" fill="#1d3251" rx="1.2"/></g></svg>
<svg class="abs" style="left:559px;top:381px" width="11" height="12"><g transform="translate(0 0.2)"><path d="M1.1 5.1 L3.3 7.2 L8.5 2.2" fill="none" stroke="#ffffff" stroke-width="1.6"/></g></svg>
<div class="t" style="left:575.7px;top:383.46px;font-size:6.65px;color:#f2f2f2;transform:scaleX(0.899);transform-origin:0 50%">Изменение модели</div>
<div class="abs" style="left:521.2px;top:397px;width:158.8px;height:1px;background:#303030"></div>
<svg class="abs" style="left:559px;top:403px" width="11" height="12"><g transform="translate(0 0.7)"><rect width="10" height="10" fill="#1d3251" rx="1.2"/></g></svg>
<svg class="abs" style="left:559px;top:403px" width="11" height="12"><g transform="translate(0 0.7)"><path d="M1.1 5.1 L3.3 7.2 L8.5 2.2" fill="none" stroke="#ffffff" stroke-width="1.6"/></g></svg>
<div class="t" style="left:575.7px;top:405.96px;font-size:6.65px;color:#f2f2f2;transform:scaleX(0.899);transform-origin:0 50%">Резервное копирование</div>
<div class="abs" style="left:521.2px;top:419.5px;width:158.8px;height:1px;background:#303030"></div>
<svg class="abs" style="left:559px;top:426px" width="11" height="12"><g transform="translate(0 0.45)"><rect width="10" height="10" fill="#1d3251" rx="1.2"/></g></svg>
<svg class="abs" style="left:559px;top:426px" width="11" height="12"><g transform="translate(0 0.45)"><path d="M1.1 5.1 L3.3 7.2 L8.5 2.2" fill="none" stroke="#ffffff" stroke-width="1.6"/></g></svg>
<div class="t" style="left:575.7px;top:428.71px;font-size:6.65px;color:#f2f2f2;transform:scaleX(0.896);transform-origin:0 50%">Подписка на телеметрию</div>
<div class="abs" style="left:521.2px;top:442.5px;width:158.8px;height:1px;background:#303030"></div>
<svg class="abs" style="left:546px;top:449px" width="12" height="12"><g transform="translate(0.3 0.2)"><rect width="10" height="10" fill="#1d3251" rx="1.2"/></g></svg>
<div class="t" style="left:563.2px;top:452.06px;font-size:6.65px;color:#f2f2f2;transform:scaleX(0.854);transform-origin:0 50%">Сервер БД RBS</div>
<svg class="abs" style="left:532px;top:452px" width="5" height="6"><g transform="translate(0.6 0.65)"><path d="M0 0 L3.2 1.9 L0 3.8 Z" fill="#f2f2f2"/></g></svg>
<svg class="abs" style="left:546px;top:487px" width="12" height="12"><g transform="translate(0.3 0.4)"><rect width="10" height="10" fill="#1d3251" rx="1.2"/></g></svg>
<div class="t" style="left:563.2px;top:489.66px;font-size:6.65px;color:#f2f2f2;transform:scaleX(0.871);transform-origin:0 50%">Сервер ТМ TMS</div>
<svg class="abs" style="left:532px;top:490px" width="5" height="6"><g transform="translate(0.6 0.85)"><path d="M0 0 L3.2 1.9 L0 3.8 Z" fill="#f2f2f2"/></g></svg>
<svg class="abs" style="left:541px;top:129px" width="21" height="20"><g transform="translate(0 0.55)"><rect x="0.88" y="0.88" width="18.15" height="16.65" rx="1" fill="none" stroke="#f20808" stroke-width="1.75"/></g></svg>
<svg class="abs" style="left:553px;top:153px" width="21" height="289"><g transform="translate(0.8 0.1)"><rect x="0.88" y="0.88" width="17.15" height="285.65" rx="1" fill="none" stroke="#f20808" stroke-width="1.75"/></g></svg>
</div></body></html>
